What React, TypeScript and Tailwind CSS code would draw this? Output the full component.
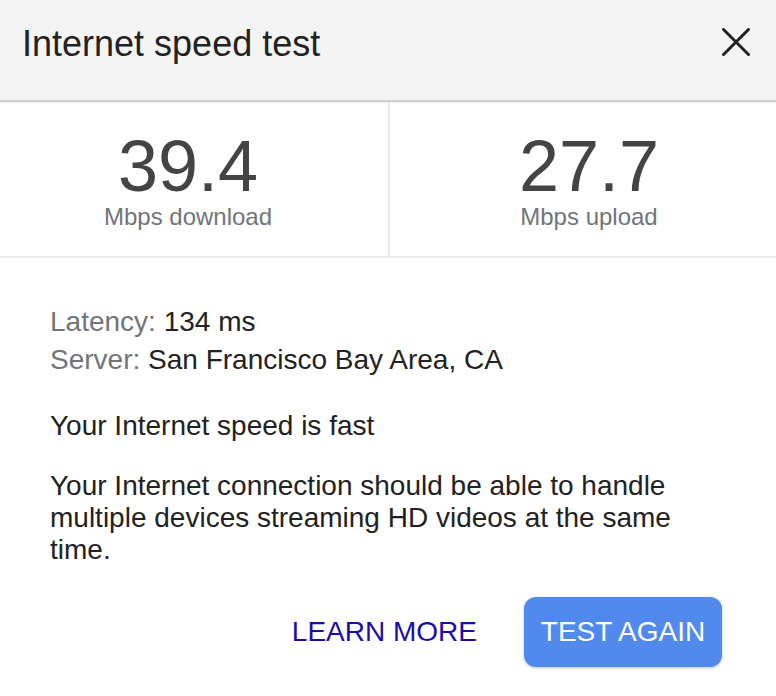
const font = { fontFamily: '"Liberation Sans", Arial, sans-serif' };

function CloseIcon() {
  return (
    <svg width="28" height="28" viewBox="0 0 28 28" className="mt-[2px] shrink-0" aria-hidden>
      <path d="M1.5 1.5 L26.5 26.5 M26.5 1.5 L1.5 26.5" stroke="#222" strokeWidth="3" strokeLinecap="square" fill="none" />
    </svg>
  );
}

function Stat({ value, label, className }: { value: string; label: string; className: string }) {
  return (
    <div className={`flex flex-col items-center pt-[34px] pb-[27px] ${className}`}>
      <span className="text-[72px] leading-[60px] text-[#444]">{value}</span>
      <span className="mt-[9px] text-[24px] leading-none text-[#70757a]">{label}</span>
    </div>
  );
}

export default function App() {
  return (
    <div className="w-[776px] h-[696px] bg-white overflow-hidden" style={font}>
      {/* Header */}
      <header className="h-[102px] bg-[#f4f4f4] border-b-2 border-[#d0d0d0] shadow-[0_1px_1px_rgba(0,0,0,0.05)] flex items-start justify-between pl-[22px] pr-[26px] pt-[26px]">
        <h1 className="text-[36px] leading-none text-[#222]">Internet speed test</h1>
        <CloseIcon />
      </header>

      {/* Results */}
      <section className="flex border-b-2 border-[#ebebeb]">
        <Stat value="39.4" label="Mbps download" className="w-[390px] pr-[12px] border-r-2 border-[#ebebeb]" />
        <Stat value="27.7" label="Mbps upload" className="flex-1 pl-[12px]" />
      </section>

      {/* Details */}
      <section className="px-[50px] pt-[45px] text-[28px] text-[#222]">
        <div className="leading-[38px]">
          <div>
            <span className="text-[#70757a]">Latency:</span> 134 ms
          </div>
          <div>
            <span className="text-[#70757a]">Server:</span> San Francisco Bay Area, CA
          </div>
        </div>
        <p className="mt-[31px] leading-[32px]">Your Internet speed is fast</p>
        <p className="mt-[28px] leading-[32px]">
          Your Internet connection should be able to handle multiple devices streaming HD videos at the same time.
        </p>

        <div className="mt-[31px] mr-[4px] flex items-center justify-end gap-[31px]">
          <button className="px-[16px] h-[70px] text-[28px] text-[#1a0dab]">LEARN MORE</button>
          <button className="w-[198px] h-[70px] rounded-[12px] bg-[#5289ec] text-[28px] text-white shadow-[0_1px_3px_rgba(0,0,0,0.25)]">
            TEST AGAIN
          </button>
        </div>
      </section>
    </div>
  );
}
